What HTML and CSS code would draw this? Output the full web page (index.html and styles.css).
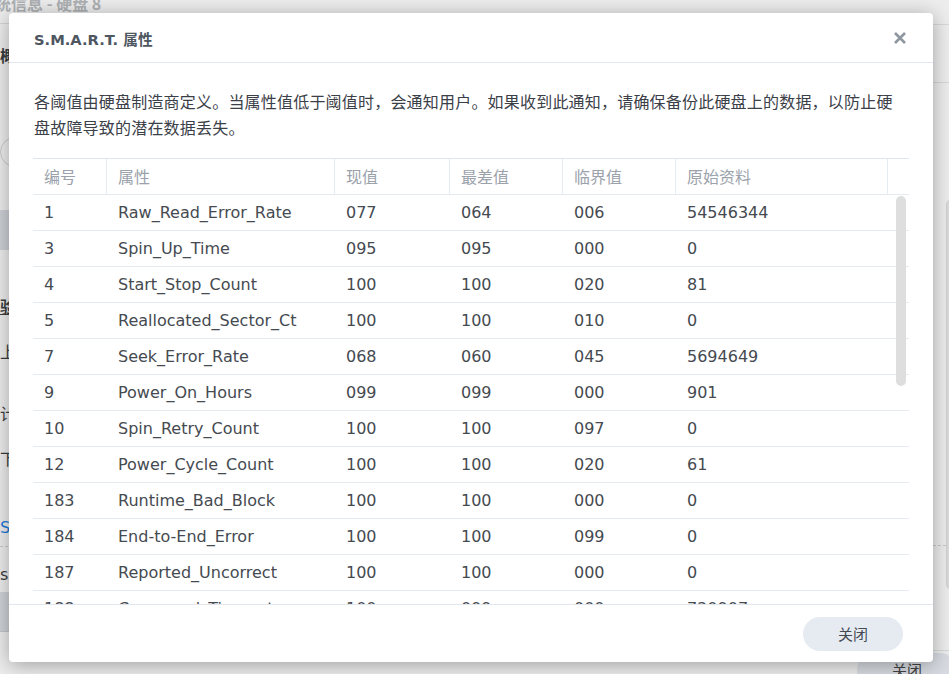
FILE: index.html
```html
<!DOCTYPE html>
<html lang="zh-CN">
<head>
<meta charset="utf-8">
<title>S.M.A.R.T. 属性</title>
<link rel="stylesheet" href="styles.css">
</head>
<body>
<div class="desk">
  <div class="bgwin">
    <div class="bg-title">系统信息 - 硬盘 8</div>
    <div class="bg-main">
      <div class="bg-side">
        <div class="bg-item b1">概</div>
        <div class="bg-circle"></div>
        <div class="bg-sel"></div>
        <div class="bg-item b2">验</div>
        <div class="bg-item b3">上</div>
        <div class="bg-item b4">计</div>
        <div class="bg-item b5">下</div>
        <div class="bg-item b6">S.</div>
        <div class="bg-dashl"></div>
        <div class="bg-item b7">s.</div>
        <div class="bg-sel2"></div>
      </div>
      <div class="bg-right">
        <div class="bg-line l1"></div>
        <div class="bg-line l2"></div>
        <div class="bg-mid">
          <div class="bg-dash"></div>
          <div class="bg-scroll"></div>
        </div>
        <div class="bg-line l3"></div>
        <div class="bg-btn">关闭</div>
      </div>
    </div>
  </div>

  <div class="modal">
    <div class="m-head">
      <div class="m-title">S.M.A.R.T. 属性</div>
      <svg class="m-close" width="14" height="14" viewBox="0 0 14 14"><path d="M2 2 L12 12 M12 2 L2 12" stroke="#8e979f" stroke-width="2.6" stroke-linecap="butt" fill="none"/></svg>
    </div>
    <div class="m-content">
      <p class="desc">各阈值由硬盘制造商定义。当属性值低于阈值时，会通知用户。如果收到此通知，请确保备份此硬盘上的数据，以防止硬盘故障导致的潜在数据丢失。</p>
      <div class="grid">
        <div class="row head">
          <div class="c">编号</div><div class="c">属性</div><div class="c">现值</div><div class="c">最差值</div><div class="c">临界值</div><div class="c">原始资料</div><div class="c last"></div>
        </div>
        <div class="body">
          <div class="row"><div class="c">1</div><div class="c">Raw_Read_Error_Rate</div><div class="c">077</div><div class="c">064</div><div class="c">006</div><div class="c">54546344</div><div class="c"></div></div>
          <div class="row"><div class="c">3</div><div class="c">Spin_Up_Time</div><div class="c">095</div><div class="c">095</div><div class="c">000</div><div class="c">0</div><div class="c"></div></div>
          <div class="row"><div class="c">4</div><div class="c">Start_Stop_Count</div><div class="c">100</div><div class="c">100</div><div class="c">020</div><div class="c">81</div><div class="c"></div></div>
          <div class="row"><div class="c">5</div><div class="c">Reallocated_Sector_Ct</div><div class="c">100</div><div class="c">100</div><div class="c">010</div><div class="c">0</div><div class="c"></div></div>
          <div class="row"><div class="c">7</div><div class="c">Seek_Error_Rate</div><div class="c">068</div><div class="c">060</div><div class="c">045</div><div class="c">5694649</div><div class="c"></div></div>
          <div class="row"><div class="c">9</div><div class="c">Power_On_Hours</div><div class="c">099</div><div class="c">099</div><div class="c">000</div><div class="c">901</div><div class="c"></div></div>
          <div class="row"><div class="c">10</div><div class="c">Spin_Retry_Count</div><div class="c">100</div><div class="c">100</div><div class="c">097</div><div class="c">0</div><div class="c"></div></div>
          <div class="row"><div class="c">12</div><div class="c">Power_Cycle_Count</div><div class="c">100</div><div class="c">100</div><div class="c">020</div><div class="c">61</div><div class="c"></div></div>
          <div class="row"><div class="c">183</div><div class="c">Runtime_Bad_Block</div><div class="c">100</div><div class="c">100</div><div class="c">000</div><div class="c">0</div><div class="c"></div></div>
          <div class="row"><div class="c">184</div><div class="c">End-to-End_Error</div><div class="c">100</div><div class="c">100</div><div class="c">099</div><div class="c">0</div><div class="c"></div></div>
          <div class="row"><div class="c">187</div><div class="c">Reported_Uncorrect</div><div class="c">100</div><div class="c">100</div><div class="c">000</div><div class="c">0</div><div class="c"></div></div>
          <div class="row"><div class="c">188</div><div class="c">Command_Timeout</div><div class="c">100</div><div class="c">099</div><div class="c">000</div><div class="c">720907</div><div class="c"></div></div>
          <div class="row"><div class="c">189</div><div class="c">High_Fly_Writes</div><div class="c">100</div><div class="c">100</div><div class="c">000</div><div class="c">0</div><div class="c"></div></div>
          <div class="thumb"></div>
        </div>
      </div>
    </div>
    <div class="m-foot">
      <button class="btn">关闭</button>
    </div>
  </div>
</div>
</body>
</html>
```

FILE: styles.css
```css
* { box-sizing: border-box; }
html, body { margin: 0; padding: 0; }
body {
  width: 949px;
  height: 674px;
  overflow: hidden;
  background: #e4e5e7;
  font-family: "DejaVu Sans", "Noto Sans CJK SC", sans-serif;
}
.desk { position: relative; width: 949px; height: 674px; overflow: hidden; }

/* background window (dimmed) */
.bgwin { display: flow-root; width: 949px; height: 674px; background: #ededed; color: #3a3d40; }
.bg-title {
  height: 22px;
  margin-left: -21px;
  margin-top: -8px;
  font-size: 16px;
  font-weight: bold;
  color: #aeb1b4;
  line-height: 22px;
  font-family: "Noto Sans CJK SC", sans-serif;
}
.bg-main { display: flex; justify-content: space-between; margin-top: -1px; }
.bg-side { width: 40px; display: flex; flex-direction: column; border-top: 1px solid #d3d6d9; margin-top: 10px; }
.bg-item { font-size: 16px; font-weight: bold; height: 22px; line-height: 22px; font-family: "Noto Sans CJK SC", sans-serif; }
.b1 { margin-top: 20px; }
.bg-circle { width: 30px; height: 30px; border: 1px solid #c7cacd; border-radius: 50%; margin-top: 71px; margin-left: 0; }
.bg-sel { height: 40px; background: #cdd1d6; margin-top: 43px; }
.b2 { margin-top: 45px; text-decoration: underline; }
.b3 { margin-top: 23px; font-weight: normal; }
.b4 { margin-top: 40px; font-weight: normal; }
.b5 { margin-top: 23px; font-weight: normal; }
.b6 { margin-top: 48px; color: #1f7ad8; font-weight: normal; font-family: "DejaVu Sans", sans-serif; }
.bg-dashl { border-top: 1px dashed #c6c9cc; margin-top: 7px; }
.b7 { margin-top: 17px; font-weight: normal; font-family: "DejaVu Sans", sans-serif; }
.bg-sel2 { height: 40px; background: #d0d3d7; margin-top: 6px; border-bottom: 1px solid #c4c7cb; }

.bg-right { width: 120px; display: flex; flex-direction: column; align-items: flex-end; }
.bg-line { width: 120px; height: 1px; background: #d5d8db; }
.bg-line.l1 { margin-top: 11px; }
.bg-line.l2 { margin-top: 57px; }
.bg-mid { display: flex; align-items: flex-start; margin-top: 116px; margin-right: -9px; }
.bg-dash { width: 120px; border-top: 1px dashed #c6c9cc; margin-top: 346px; }
.bg-scroll { width: 12px; height: 391px; border-radius: 6px; background: #dadada; border: 1px solid #cfcfcf; }
.bg-line.l3 { margin-top: 60px; }
.bg-btn {
  margin-top: 2px; width: 100px; height: 34px; border-radius: 17px; background: #d7dbe1;
  font-size: 15px; color: #444; text-align: center; line-height: 34px; margin-right: -8px;
  font-family: "Noto Sans CJK SC", sans-serif;
}

/* modal */
.modal {
  position: absolute;
  left: 9px;
  top: 13px;
  width: 924px;
  height: 649px;
  background: #fff;
  border-radius: 4px;
  box-shadow: 0 3px 20px rgba(0,0,0,0.33);
  display: flex;
  flex-direction: column;
  overflow: hidden;
}
.m-head {
  height: 50px;
  flex: none;
  border-bottom: 1px solid #e2e7ee;
  display: flex;
  align-items: center;
  justify-content: space-between;
  padding: 0 26px 0 25px;
}
.m-title {
  font-size: 14.7px;
  font-weight: bold;
  color: #4e5660;
  font-family: "DejaVu Sans", "Noto Sans CJK SC", sans-serif;
  margin-top: 1px;
}
.m-close { display: block; margin-top: 1px; }

.m-content { flex: 1; padding: 0 24px; display: flex; flex-direction: column; min-height: 0; }
.desc {
  margin: 25px 0 18px 1px;
  width: 862px;
  font-size: 16px;
  letter-spacing: 0.2px;
  line-height: 26px;
  color: #3b4048;
  font-family: "Noto Sans CJK SC", sans-serif;
}
.grid { display: flex; flex-direction: column; flex: 1; min-height: 0; border-top: 1px solid #dfe5ec; }
.row {
  display: grid;
  grid-template-columns: 74px 228px 115px 113px 113px 212px 21px;
  height: 36px;
  border-bottom: 1px solid #e6ebf1;
  flex: none;
}
.c {
  padding-left: 11px;
  font-size: 16px;
  line-height: 35px;
  color: #454a51;
  white-space: nowrap;
  overflow: hidden;
}
.head .c { color: #9ba2ab; border-right: 1px solid #e6ebf1; font-family: "Noto Sans CJK SC", sans-serif; }
.head .c.last { border-right: none; }
.body { position: relative; flex: 1; overflow: hidden; }
.thumb {
  position: absolute;
  left: 863px;
  top: 1px;
  width: 10px;
  height: 190px;
  border-radius: 5px;
  background: #dedede;
}
.m-foot {
  height: 58px;
  flex: none;
  border-top: 1px solid #e2e7ee;
  display: flex;
  align-items: center;
  justify-content: flex-end;
  padding-right: 30px;
}
.btn {
  width: 100px;
  height: 34px;
  border: none;
  border-radius: 17px;
  background: #e6ebf2;
  color: #434a52;
  font-size: 15px;
  font-family: "Noto Sans CJK SC", sans-serif;
  padding: 0;
}
```
